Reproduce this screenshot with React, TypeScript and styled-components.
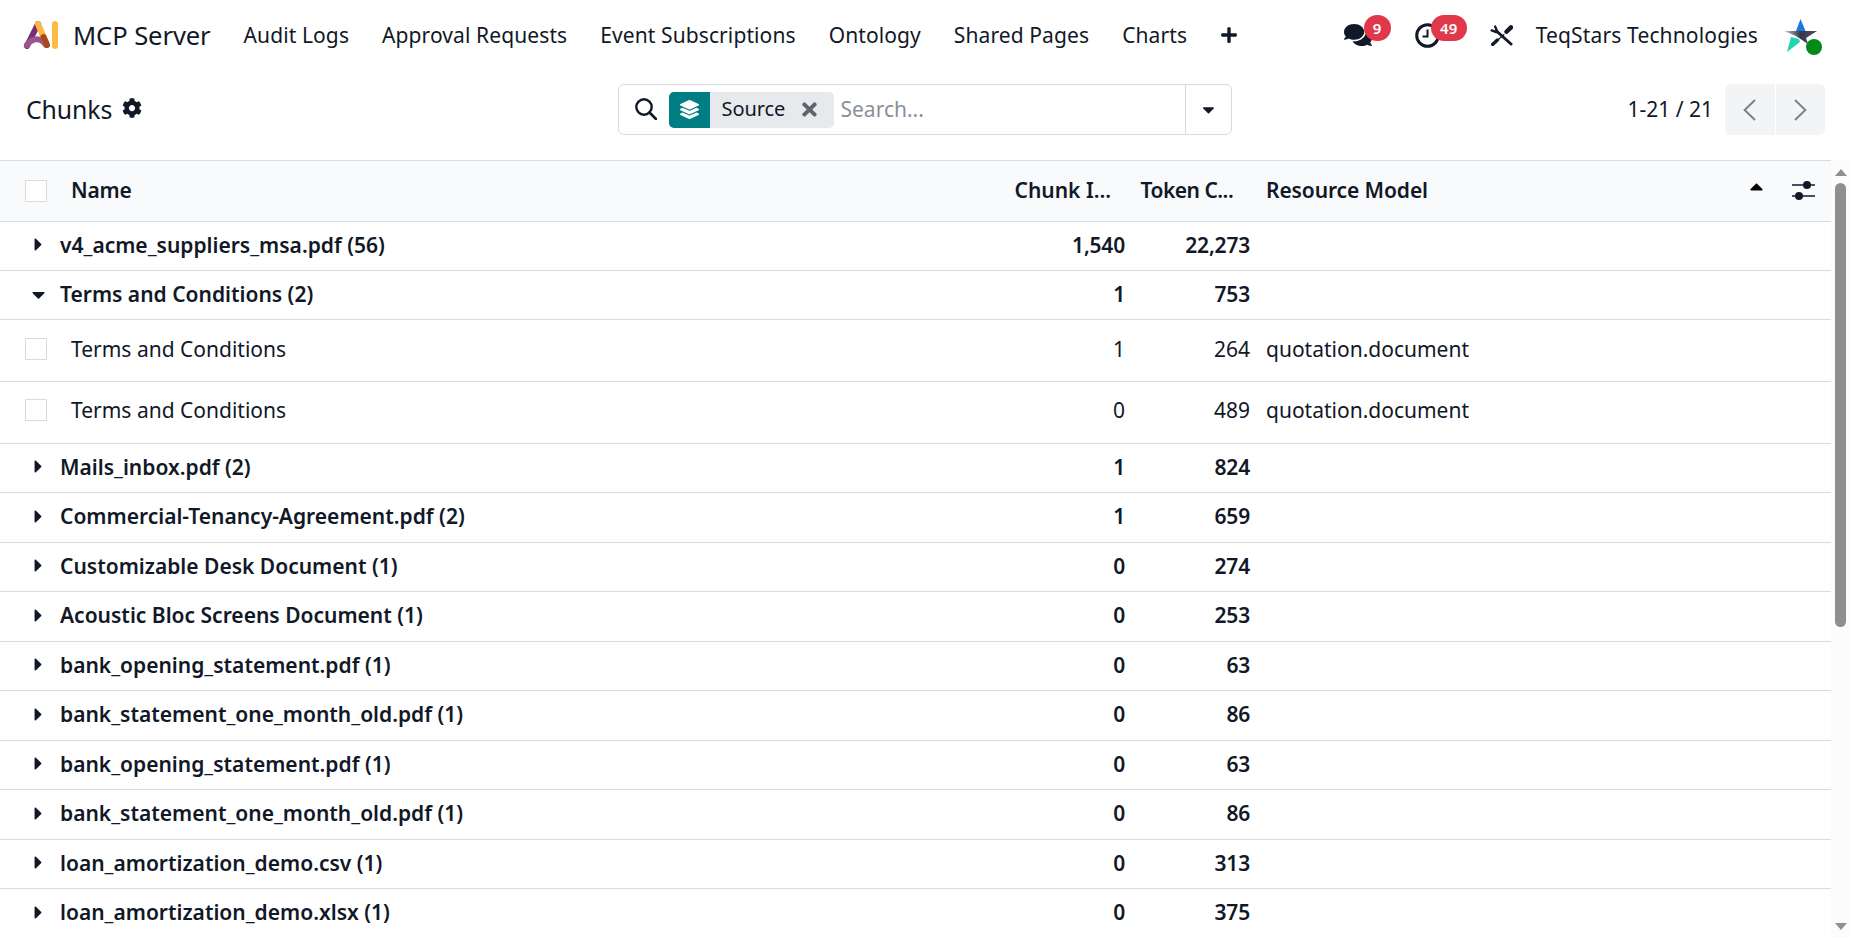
import React from "react";
import styled, { createGlobalStyle } from "styled-components";
import { FaCog, FaComments, FaPlus, FaLayerGroup, FaTimes, FaCaretDown, FaCaretRight, FaCaretUp } from "react-icons/fa";

const Global = createGlobalStyle`
  html, body { margin: 0; padding: 0; height: 938px; overflow: hidden; background: #fff; }
  body { font-family: "Noto Sans", "Open Sans", sans-serif; color: #111827; font-size: 21px; }
  * { box-sizing: border-box; }
`;

const Page = styled.div`
  display: flex;
  flex-direction: column;
  height: 938px;
  overflow: hidden;
`;

const Navbar = styled.nav`
  display: flex;
  align-items: center;
  height: 70px;
  padding: 0 28px 0 23px;
  flex: none;
`;
const Brand = styled.span`
  font-size: 25.6px;
  margin: 0 33px 0 14px;
  letter-spacing: -0.1px;
`;
const MenuItem = styled.span`
  margin-right: 33px;
  letter-spacing: 0.1px;
`;
const PlusBtn = styled.span`
  display: flex;
  font-size: 18px;
`;
const Spacer = styled.div`
  flex: 1;
`;
const Systray = styled.div`
  display: flex;
  align-items: center;
`;
const TrayIcon = styled.span<{ $w: number }>`
  position: relative;
  display: flex;
  align-items: center;
  width: ${(p) => p.$w}px;
  font-size: 28px;
  height: 32px;
`;
const Badge = styled.span<{ $left: number; $w: number }>`
  position: absolute;
  left: ${(p) => p.$left}px;
  top: -4px;
  width: ${(p) => p.$w}px;
  height: 26px;
  border-radius: 13px;
  background: #e0374b;
  color: #fff;
  font-size: 15px;
  font-weight: 600;
  display: flex;
  align-items: center;
  justify-content: center;
`;
const Company = styled.span`
  letter-spacing: 0.15px;
  margin-right: 26px;
`;
const Avatar = styled.span`
  position: relative;
  display: flex;
  width: 38px;
  height: 36px;
  margin-top: 4px;
`;
const Presence = styled.span`
  position: absolute;
  left: 22px;
  top: 20px;
  width: 16px;
  height: 16px;
  border-radius: 50%;
  background: #018a17;
`;

const ControlPanel = styled.div`
  display: grid;
  grid-template-columns: 1fr 614px 1fr;
  height: 90px;
  padding: 14px 25px 25px 26px;
  flex: none;
  align-items: center;
`;
const TitleWrap = styled.div`
  display: flex;
  align-items: center;
  gap: 10px;
`;
const Title = styled.span`
  font-size: 24.8px;
  letter-spacing: -0.1px;
  padding-bottom: 2px;
`;
const GearIcon = styled.span`
  display: flex;
  font-size: 20px;
  margin-top: -3px;
`;
const SearchBox = styled.div`
  margin-left: -1px;
  display: flex;
  align-items: center;
  height: 51px;
  width: 614px;
  border: 1px solid #d8dadd;
  border-radius: 6px;
`;
const SearchIconWrap = styled.span`
  display: flex;
  margin: -2px 12px 0 16px;
`;
const Facet = styled.div`
  display: flex;
  align-items: stretch;
  height: 36px;
  width: 165px;
  border-radius: 5px;
  overflow: hidden;
  background: #e7e9ed;
  flex: none;
`;
const FacetIcon = styled.span`
  width: 41px;
  background: #017e84;
  color: #fff;
  display: flex;
  align-items: center;
  justify-content: center;
  font-size: 19px;
`;
const FacetLabel = styled.span`
  flex: 1;
  padding-left: 12px;
  font-size: 20px;
  line-height: 34px;
  letter-spacing: -0.1px;
`;
const FacetClose = styled.span`
  display: flex;
  align-items: center;
  padding-right: 14px;
  font-size: 21px;
  color: #5f636b;
`;
const Placeholder = styled.span`
  flex: 1;
  padding: 0 0 2px 7px;
  color: #8a8f99;
`;
const Dropdown = styled.span`
  width: 46px;
  height: 100%;
  border-left: 1px solid #d8dadd;
  display: flex;
  align-items: center;
  justify-content: center;
  font-size: 19px;
`;
const PagerWrap = styled.div`
  display: flex;
  align-items: center;
  justify-content: flex-end;
`;
const PagerText = styled.span`
  margin-right: 12px;
  padding-bottom: 2px;
`;
const PagerBtn = styled.span<{ $side: "l" | "r" }>`
  width: 49.5px;
  height: 51px;
  background: #f3f4f6;
  color: #7b7f87;
  display: flex;
  align-items: center;
  justify-content: center;
  border-radius: ${(p) => (p.$side === "l" ? "6px 0 0 6px" : "0 6px 6px 0")};
  margin-left: ${(p) => (p.$side === "r" ? "1px" : "0")};
`;

const ListArea = styled.div`
  flex: 1;
  min-height: 0;
  display: flex;
  overflow: hidden;
`;
const Table = styled.div`
  flex: 1;
  min-width: 0;
`;
const COLS = "1007.5px 126px 125px 1fr";
const HeaderRow = styled.div`
  display: grid;
  grid-template-columns: ${COLS} 44px;
  height: 62px;
  align-items: center;
  background: #f9fafb;
  border-top: 1px solid #d8dadd;
  border-bottom: 1px solid #d8dadd;
  font-weight: 600;
  letter-spacing: -0.1px;
`;
const Row = styled.div<{ $h: number; $lift: number }>`
  display: grid;
  grid-template-columns: ${COLS};
  height: ${(p) => p.$h}px;
  padding-bottom: ${(p) => p.$lift}px;
  align-items: center;
  border-bottom: 1px solid #d8dadd;
`;
const NameCell = styled.div<{ $weight: number; $spacing?: number }>`
  display: flex;
  align-items: center;
  min-width: 0;
  padding-left: 25px;
  font-weight: ${(p) => p.$weight};
  letter-spacing: ${(p) => p.$spacing ?? 0}px;
  white-space: nowrap;
`;
const Check = styled.span`
  width: 22px;
  height: 22px;
  border: 1px solid #d8dadd;
  background: #fff;
  flex: none;
  margin-right: 24px;
`;
const HeadLabel = styled.span`
  padding-bottom: 3px;
`;
const Caret = styled.span`
  display: flex;
  justify-content: center;
  width: 27px;
  margin-right: 8px;
  font-size: 21px;
  color: #111827;
`;
const NumCell = styled.div<{ $bold?: boolean }>`
  text-align: right;
  padding-right: 8.5px;
  font-weight: ${(p) => (p.$bold ? 600 : 400)};
  letter-spacing: ${(p) => (p.$bold ? "-0.2px" : "0")};
`;
const HeadNum = styled.div<{ $spacing: number }>`
  padding: 0 0 3px 7px;
  white-space: nowrap;
  letter-spacing: ${(p) => p.$spacing}px;
`;
const TextCell = styled.div`
  padding-left: 7.5px;
`;
const HeaderLast = styled.div`
  display: flex;
  align-items: center;
  justify-content: space-between;
  padding: 0 20px 0 7.5px;
`;
const SortIcon = styled.span`
  display: flex;
  font-size: 21px;
  color: #000;
  margin-top: -9px;
`;
const OptionalCol = styled.span`
  display: flex;
  justify-content: center;
  width: 44px;
  padding: 0 11px 2px 0;
`;

const Scrollbar = styled.div`
  width: 19px;
  flex: none;
  display: flex;
  flex-direction: column;
  align-items: center;
  background: #fcfcfc;
  padding: 9px 0 8px;
`;
const ArrowUp = styled.span`
  width: 0;
  height: 0;
  border-left: 6.5px solid transparent;
  border-right: 6.5px solid transparent;
  border-bottom: 7px solid #8f8f8f;
  flex: none;
`;
const ArrowDown = styled(ArrowUp)`
  border-bottom: 0;
  border-top: 7px solid #8f8f8f;
`;
const Track = styled.div`
  flex: 1;
  width: 100%;
  padding: 7px 4px 0;
`;
const Thumb = styled.div`
  height: 444px;
  border-radius: 6px;
  background: #8f8f8f;
`;

const Logo = () => (
  <svg width="36" height="28" viewBox="0 0 36 28" fill="none" style={{ flex: "none" }}>
    <path d="M15 3 L4 25" stroke="#7b2f72" strokeWidth="6" strokeLinecap="round" />
    <path d="M4 24 C8 18 17 15 23 24" stroke="#9a5490" strokeWidth="6" strokeLinecap="round" fill="none" />
    <path d="M15 3 L24 24" stroke="#fdb83f" strokeWidth="6" strokeLinecap="round" />
    <path d="M20.5 16 L24 24" stroke="#a6491f" strokeWidth="6" strokeLinecap="round" />
    <path d="M32 3 V25" stroke="#fdbb45" strokeWidth="6" strokeLinecap="round" />
  </svg>
);

const Star = () => (
  <svg width="34" height="34" viewBox="0 0 34 34">
    <defs>
      <linearGradient id="arm" x1="0" y1="0" x2="1" y2="0">
        <stop offset="0" stopColor="#c9cad4" />
        <stop offset="0.5" stopColor="#35364a" />
        <stop offset="1" stopColor="#4c4e60" />
      </linearGradient>
    </defs>
    <path d="M16.5 0 L21.5 12 L12 12 Z" fill="#1a78e0" />
    <path d="M7 18 L3 33 L16 23 L15 20 Z" fill="#1fd6ad" />
    <path d="M21 18 L33 12 L22 14 Z" fill="#1fd6ad" />
    <path d="M0 12 L33 12 L22 19 L24 25 L12 17 Z" fill="url(#arm)" />
  </svg>
);

const Sliders = () => (
  <svg width="23" height="19" viewBox="0 0 23 19" fill="none">
    <path d="M0 4 H23 M0 15 H23" stroke="#111827" strokeWidth="1.4" />
    <circle cx="15" cy="4" r="4" fill="#111827" />
    <circle cx="7" cy="15" r="4" fill="#111827" />
  </svg>
);

const SearchGlyph = () => (
  <svg width="22" height="22" viewBox="0 0 22 22" fill="none" stroke="#111827">
    <circle cx="9" cy="9" r="7.7" strokeWidth="2.4" />
    <path d="M14.5 14.5 L21 21" strokeWidth="2.6" strokeLinecap="round" />
  </svg>
);

const Clock = () => (
  <svg width="25" height="25" viewBox="0 0 25 25" fill="none" stroke="#111827">
    <circle cx="12.5" cy="12.5" r="10.8" strokeWidth="3" />
    <path d="M12.5 6.5 V13.5 H7.5" strokeWidth="2" />
  </svg>
);

const Tools = () => (
  <svg width="23" height="21" viewBox="0 0 23 21" fill="none" stroke="#111827" strokeLinecap="round">
    <path d="M7 6.5 L21 19" strokeWidth="3" />
    <path d="M6.2 7 L1.6 5.4" strokeWidth="2.4" />
    <path d="M7 6.2 L5.2 1.6" strokeWidth="2.4" />
    <path d="M21 2.4 L16.5 6.8" strokeWidth="4.4" />
    <path d="M14 9.5 L9 14" strokeWidth="1.1" />
    <path d="M7.4 15 L2.6 19.4" strokeWidth="3.4" />
  </svg>
);

const Chevron = ({ dir }: { dir: "l" | "r" }) => (
  <svg width="13" height="22" viewBox="0 0 13 22" fill="none" stroke="currentColor" strokeWidth="1.9">
    <path d={dir === "l" ? "M12 1 L1.6 11 L12 21" : "M1 1 L11.4 11 L1 21"} />
  </svg>
);

type R = { name: string; chunk: string; token: string };
const before: R[] = [{ name: "v4_acme_suppliers_msa.pdf (56)", chunk: "1,540", token: "22,273" }];
const open: R = { name: "Terms and Conditions (2)", chunk: "1", token: "753" };
const details = [
  { chunk: "1", token: "264" },
  { chunk: "0", token: "489" },
];
const after: R[] = [
  { name: "Mails_inbox.pdf (2)", chunk: "1", token: "824" },
  { name: "Commercial-Tenancy-Agreement.pdf (2)", chunk: "1", token: "659" },
  { name: "Customizable Desk Document (1)", chunk: "0", token: "274" },
  { name: "Acoustic Bloc Screens Document (1)", chunk: "0", token: "253" },
  { name: "bank_opening_statement.pdf (1)", chunk: "0", token: "63" },
  { name: "bank_statement_one_month_old.pdf (1)", chunk: "0", token: "86" },
  { name: "bank_opening_statement.pdf (1)", chunk: "0", token: "63" },
  { name: "bank_statement_one_month_old.pdf (1)", chunk: "0", token: "86" },
  { name: "loan_amortization_demo.csv (1)", chunk: "0", token: "313" },
  { name: "loan_amortization_demo.xlsx (1)", chunk: "0", token: "375" },
];

const GroupRow = ({ r, expanded, h = 49.5 }: { r: R; expanded?: boolean; h?: number }) => (
  <Row $h={h} $lift={2}>
    <NameCell $weight={600} $spacing={0}>
      <Caret>{expanded ? <FaCaretDown /> : <FaCaretRight />}</Caret>
      {r.name}
    </NameCell>
    <NumCell $bold>{r.chunk}</NumCell>
    <NumCell $bold>{r.token}</NumCell>
    <div />
  </Row>
);

export default function App() {
  return (
    <Page>
      <Global />
      <Navbar>
        <Logo />
        <Brand>MCP Server</Brand>
        <MenuItem>Audit Logs</MenuItem>
        <MenuItem>Approval Requests</MenuItem>
        <MenuItem>Event Subscriptions</MenuItem>
        <MenuItem>Ontology</MenuItem>
        <MenuItem>Shared Pages</MenuItem>
        <MenuItem>Charts</MenuItem>
        <PlusBtn><FaPlus /></PlusBtn>
        <Spacer />
        <Systray>
          <TrayIcon $w={71}>
            <FaComments />
            <Badge $left={20} $w={27}>9</Badge>
          </TrayIcon>
          <TrayIcon $w={75}>
            <Clock />
            <Badge $left={16} $w={36}>49</Badge>
          </TrayIcon>
          <TrayIcon $w={46}><Tools /></TrayIcon>
          <Company>TeqStars Technologies</Company>
          <Avatar>
            <Star />
            <Presence />
          </Avatar>
        </Systray>
      </Navbar>
      <ControlPanel>
        <TitleWrap>
          <Title>Chunks</Title>
          <GearIcon><FaCog /></GearIcon>
        </TitleWrap>
        <SearchBox>
          <SearchIconWrap><SearchGlyph /></SearchIconWrap>
          <Facet>
            <FacetIcon><FaLayerGroup /></FacetIcon>
            <FacetLabel>Source</FacetLabel>
            <FacetClose><FaTimes /></FacetClose>
          </Facet>
          <Placeholder>Search...</Placeholder>
          <Dropdown><FaCaretDown /></Dropdown>
        </SearchBox>
        <PagerWrap>
          <PagerText>1-21 / 21</PagerText>
          <PagerBtn $side="l"><Chevron dir="l" /></PagerBtn>
          <PagerBtn $side="r"><Chevron dir="r" /></PagerBtn>
        </PagerWrap>
      </ControlPanel>
      <ListArea>
        <Table>
          <HeaderRow>
            <NameCell $weight={600} $spacing={-0.2}>
              <Check />
              <HeadLabel>Name</HeadLabel>
            </NameCell>
            <HeadNum $spacing={0}>Chunk I...</HeadNum>
            <HeadNum $spacing={-0.5}>Token C...</HeadNum>
            <HeaderLast>
              <HeadLabel>Resource Model</HeadLabel>
              <SortIcon><FaCaretUp /></SortIcon>
            </HeaderLast>
            <OptionalCol><Sliders /></OptionalCol>
          </HeaderRow>
          {before.map((r) => <GroupRow key={r.name} r={r} h={48.8} />)}
          <GroupRow r={open} expanded />
          {details.map((d) => (
            <Row $h={61.7} $lift={4} key={d.token}>
              <NameCell $weight={400}>
                <Check />
                Terms and Conditions
              </NameCell>
              <NumCell>{d.chunk}</NumCell>
              <NumCell>{d.token}</NumCell>
              <TextCell>quotation.document</TextCell>
            </Row>
          ))}
          {after.map((r, i) => <GroupRow key={i} r={r} />)}
        </Table>
        <Scrollbar>
          <ArrowUp />
          <Track><Thumb /></Track>
          <ArrowDown />
        </Scrollbar>
      </ListArea>
    </Page>
  );
}
